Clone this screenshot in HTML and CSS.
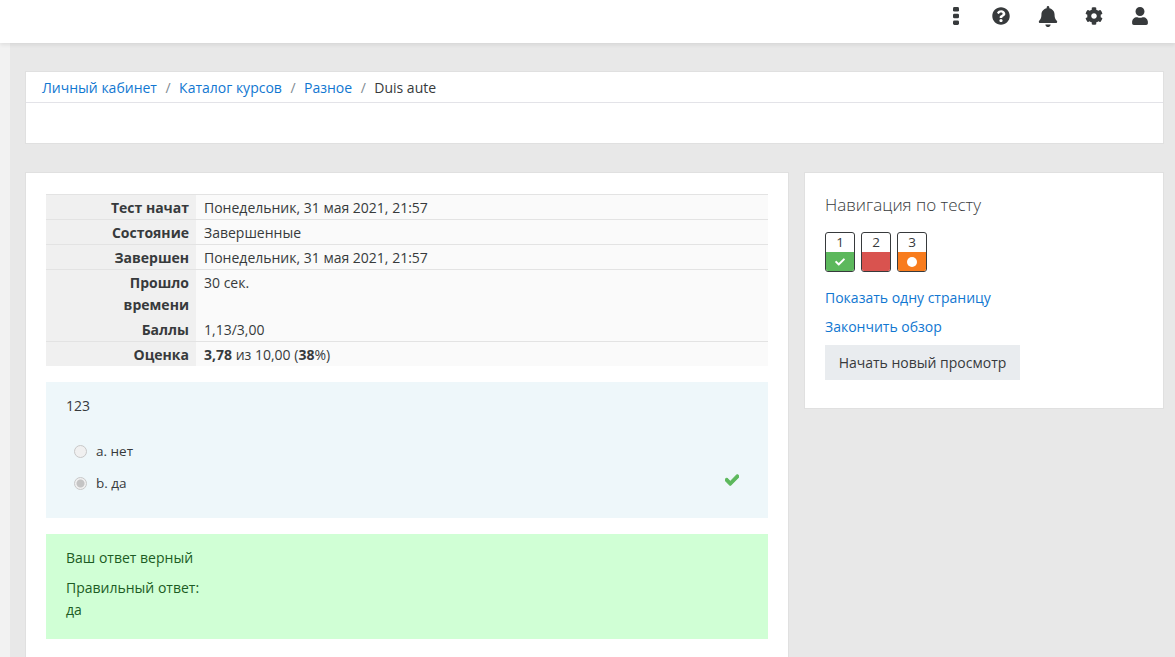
FILE: index.html
```html
<!DOCTYPE html>
<html lang="ru">
<head>
    <meta charset="UTF-8">
    <title>Duis aute</title>
    <link rel="stylesheet" href="styles.css">
</head>
<body>
<header class="topbar">
    <svg class="icon" viewBox="0 0 6 18"><rect x="0" y="0" width="6" height="4.6" rx="1.4"/><rect x="0" y="6.7" width="6" height="4.6" rx="1.4"/><rect x="0" y="13.4" width="6" height="4.6" rx="1.4"/></svg>
    <svg class="icon icon-help" viewBox="0 0 512 512"><path d="M504 256c0 136.997-111.043 248-248 248S8 392.997 8 256C8 119.083 119.043 8 256 8s248 111.083 248 248zM262.655 90c-54.497 0-89.255 22.957-116.549 63.758-3.536 5.286-2.353 12.415 2.715 16.258l34.699 26.31c5.205 3.947 12.621 3.008 16.665-2.122 17.864-22.658 30.113-35.797 57.303-35.797 20.429 0 45.698 13.148 45.698 32.958 0 14.976-12.363 22.667-32.534 33.976C247.128 238.528 216 254.941 216 296v4c0 6.627 5.373 12 12 12h56c6.627 0 12-5.373 12-12v-1.333c0-28.462 83.186-29.647 83.186-106.667 0-58.002-60.165-102-116.531-102zM256 338c-25.365 0-46 20.635-46 46 0 25.364 20.635 46 46 46s46-20.636 46-46c0-25.365-20.635-46-46-46z"/></svg>
    <svg class="icon icon-bell" viewBox="0 0 448 512"><path d="M224 512c35.32 0 63.97-28.65 63.97-64H160.03c0 35.35 28.65 64 63.97 64zm215.39-149.71c-19.32-20.76-55.47-51.99-55.47-154.29 0-77.7-54.48-139.9-127.94-155.16V32c0-17.67-14.32-32-31.98-32s-31.98 14.33-31.98 32v20.84C118.56 68.1 64.08 130.3 64.08 208c0 102.3-36.15 133.53-55.47 154.29-6 6.45-8.66 14.16-8.61 21.71.11 16.4 12.98 32 32.1 32h383.8c19.12 0 32-15.6 32.1-32 .05-7.55-2.61-15.27-8.61-21.71z"/></svg>
    <svg class="icon" viewBox="0 0 512 512"><path d="M487.4 315.7l-42.6-24.6c4.3-23.2 4.3-47 0-70.2l42.6-24.6c4.9-2.8 7.1-8.6 5.5-14-11.1-35.6-30-67.8-54.7-94.6-3.8-4.1-10-5.1-14.8-2.3L380.8 110c-17.9-15.4-38.5-27.3-60.8-35.1V25.8c0-5.6-3.9-10.5-9.4-11.7-36.7-8.2-74.3-7.8-109.2 0-5.5 1.2-9.4 6.1-9.4 11.7V75c-22.2 7.9-42.8 19.8-60.8 35.1L88.7 85.5c-4.9-2.8-11-1.9-14.8 2.3-24.7 26.7-43.6 58.9-54.7 94.6-1.7 5.4.6 11.2 5.5 14L67.3 221c-4.3 23.2-4.3 47 0 70.2l-42.6 24.6c-4.9 2.8-7.1 8.6-5.5 14 11.1 35.6 30 67.8 54.7 94.6 3.8 4.1 10 5.1 14.8 2.3l42.6-24.6c17.9 15.4 38.5 27.3 60.8 35.1v49.2c0 5.6 3.9 10.5 9.4 11.7 36.7 8.2 74.3 7.8 109.2 0 5.5-1.2 9.4-6.1 9.4-11.7v-49.2c22.2-7.9 42.8-19.8 60.8-35.1l42.6 24.6c4.9 2.8 11 1.9 14.8-2.3 24.7-26.7 43.6-58.9 54.7-94.6 1.5-5.5-.7-11.3-5.6-14.1zM256 336c-44.1 0-80-35.9-80-80s35.9-80 80-80 80 35.9 80 80-35.9 80-80 80z"/></svg>
    <svg class="icon" viewBox="0 0 448 512"><path d="M224 256c70.7 0 128-57.3 128-128S294.7 0 224 0 96 57.3 96 128s57.3 128 128 128zm89.6 32h-16.7c-22.2 10.2-46.9 16-72.9 16s-50.6-5.8-72.9-16h-16.7C60.2 288 0 348.2 0 422.4V464c0 26.5 21.5 48 48 48h352c26.5 0 48-21.5 48-48v-41.6c0-74.2-60.2-134.4-134.4-134.4z"/></svg>
</header>

<div class="wrapper">
    <div class="strip"></div>
    <div class="page">
        <section class="card crumbs-card">
            <nav class="crumbs">
                <a href="#">Личный кабинет</a><span class="sep">/</span>
                <a href="#">Каталог курсов</a><span class="sep">/</span>
                <a href="#">Разное</a><span class="sep">/</span>
                <span>Duis aute</span>
            </nav>
        </section>

        <div class="columns">
            <main class="card main-card">
                <table class="summary">
                    <tr><th>Тест начат</th><td>Понедельник, 31 мая 2021, 21:57</td></tr>
                    <tr><th>Состояние</th><td>Завершенные</td></tr>
                    <tr><th>Завершен</th><td>Понедельник, 31 мая 2021, 21:57</td></tr>
                    <tr class="no-line"><th>Прошло времени</th><td>30 сек.</td></tr>
                    <tr><th>Баллы</th><td>1,13/3,00</td></tr>
                    <tr><th>Оценка</th><td><b>3,78</b> из 10,00 (<b>38</b>%)</td></tr>
                </table>

                <div class="question">
                    <p class="qtext">123</p>
                    <div class="answer">
                        <span class="radio"></span>
                        <span>a. нет</span>
                    </div>
                    <div class="answer">
                        <span class="radio checked"></span>
                        <span>b. да</span>
                        <svg class="tick" viewBox="0 0 512 512"><path d="M173.898 439.404l-166.4-166.4c-9.997-9.997-9.997-26.206 0-36.204l36.203-36.204c9.997-9.998 26.207-9.998 36.204 0L192 312.69 432.095 72.596c9.997-9.997 26.207-9.997 36.204 0l36.203 36.204c9.997 9.997 9.997 26.206 0 36.204l-294.4 294.401c-9.998 9.997-26.207 9.997-36.204-.001z"/></svg>
                    </div>
                </div>

                <div class="feedback">
                    <p class="fb-first">Ваш ответ верный</p>
                    <p>Правильный ответ:<br>да</p>
                </div>
            </main>

            <aside class="card side-card">
                <h5>Навигация по тесту</h5>
                <div class="qnav">
                    <div class="qbtn">
                        <span class="num">1</span>
                        <span class="state green"><svg viewBox="0 0 512 512"><path d="M173.898 439.404l-166.4-166.4c-9.997-9.997-9.997-26.206 0-36.204l36.203-36.204c9.997-9.998 26.207-9.998 36.204 0L192 312.69 432.095 72.596c9.997-9.997 26.207-9.997 36.204 0l36.203 36.204c9.997 9.997 9.997 26.206 0 36.204l-294.4 294.401c-9.998 9.997-26.207 9.997-36.204-.001z"/></svg></span>
                    </div>
                    <div class="qbtn">
                        <span class="num">2</span>
                        <span class="state red"></span>
                    </div>
                    <div class="qbtn">
                        <span class="num">3</span>
                        <span class="state orange"><i class="dot"></i></span>
                    </div>
                </div>
                <a class="side-link" href="#">Показать одну страницу</a>
                <a class="side-link" href="#">Закончить обзор</a>
                <button class="btn" type="button">Начать новый просмотр</button>
            </aside>
        </div>
    </div>
</div>
</body>
</html>
```

FILE: styles.css
```css
html, body {
    height: 100%;
}
body {
    margin: 0;
    overflow: hidden;
    background: #e8e8e8;
    color: #373a3c;
    font-family: "Open Sans", sans-serif;
    font-size: 14px;
    line-height: 1.5;
}
a {
    color: #1177d1;
    text-decoration: none;
}
p {
    margin: 0;
}

/* top bar */
.topbar {
    position: relative;
    display: flex;
    justify-content: flex-end;
    align-items: center;
    height: 43px;
    box-sizing: border-box;
    padding: 0 12px 11px 0;
    background: #fff;
    box-shadow: 0 2px 4px rgba(0, 0, 0, .08);
}
.icon {
    width: 46px;
    height: 18px;
    fill: #373a3c;
}
.icon-help {
    margin: 0 1px 0 -1px;
}
.icon-bell {
    height: 21px;
}

.wrapper {
    display: flex;
    height: calc(100% - 43px);
}
.strip {
    flex: none;
    width: 10px;
    background: #f2f2f2;
}
.page {
    flex: 1;
    min-width: 0;
    padding: 28px 11px 0 15px;
}

.card {
    background: #fff;
    border: 1px solid #e0e0e0;
    box-sizing: border-box;
}

/* breadcrumbs */
.crumbs-card {
    height: 73px;
    margin-bottom: 28px;
}
.crumbs {
    display: flex;
    height: 29px;
    padding: 1px 0 0 16px;
    align-items: center;
    border-bottom: 1px solid #e3e3e8;
}
.sep {
    margin: 0 8.5px;
    color: #818a91;
}

.columns {
    display: flex;
    align-items: flex-start;
    gap: 15px;
}

/* main column */
.main-card {
    flex: none;
    width: 764px;
    height: 600px;
    padding: 21px 20px 0;
}
.summary {
    width: 722px;
    border-collapse: separate;
    border-spacing: 0;
    margin-bottom: 16px;
    border-top: 1px solid #e3e3e3;
}
.summary th, .summary td {
    padding: 2px 7px 0 8px;
    border-bottom: 1px solid #e3e3e3;
    vertical-align: top;
    line-height: 22px;
    font-weight: normal;
}
.summary th {
    width: 121px;
    padding-left: 22px;
    background: #f0f0f0;
    font-weight: bold;
    text-align: right;
}
.summary td {
    background: #fafafa;
}
.summary b {
    font-weight: bold;
}
.summary tr:last-child th, .summary tr:last-child td {
    border-bottom: 0;
}
.summary .no-line th {
    border-bottom-color: #f0f0f0;
}
.summary .no-line td {
    border-bottom-color: #fafafa;
}

.question {
    height: 136px;
    box-sizing: border-box;
    padding: 13px 20px 0;
    margin-bottom: 16px;
    background: #eef7fa;
    font-size: 13.5px;
}
.qtext {
    margin-bottom: 18px;
    font-size: 14px;
    line-height: 22px;
}
.answer {
    display: flex;
    align-items: center;
    height: 32px;
    padding-left: 8px;
}
.radio {
    width: 13px;
    height: 13px;
    margin-right: 9px;
    border: 1px solid #c8c8c8;
    border-radius: 50%;
    background: #f0f0f0;
    box-sizing: border-box;
}
.radio.checked {
    background: radial-gradient(circle, #c4c4c4 0 3.5px, #f0f0f0 4.5px);
}
.tick {
    width: 14px;
    height: 14px;
    margin-left: auto;
    margin-right: 9px;
    margin-top: -7px;
    fill: #5cb85c;
    stroke: #5cb85c;
    stroke-width: 40;
}

.feedback {
    height: 105px;
    box-sizing: border-box;
    padding: 13px 20px 0;
    background: #d0ffd5;
    color: #1c5c24;
    line-height: 22px;
}
.fb-first {
    margin-bottom: 8px;
}

/* quiz navigation */
.side-card {
    flex: none;
    width: 360px;
    height: 237px;
    padding: 20px;
}
h5 {
    margin: 0 0 15px;
    font-size: 17px;
    font-weight: 300;
    line-height: 24px;
    color: #373a3c;
}
.qnav {
    display: flex;
    gap: 6px;
    margin-bottom: 15px;
}
.qbtn {
    display: flex;
    flex-direction: column;
    width: 30px;
    height: 40px;
    box-sizing: border-box;
    border: 1px solid #373a3c;
    border-radius: 3px;
    overflow: hidden;
    background: #fff;
    text-align: center;
    font-size: 13.5px;
}
.num {
    height: 19px;
    line-height: 18px;
}
.state {
    flex: 1;
    display: flex;
    align-items: center;
    justify-content: center;
}
.state svg {
    width: 10px;
    height: 10px;
    fill: #fff;
}
.green { background: #5cb85c; }
.red { background: #d9534f; }
.orange { background: #f87c1d; }
.dot {
    width: 10px;
    height: 10px;
    border-radius: 50%;
    background: #fff;
}
.side-link {
    display: block;
    margin-bottom: 8px;
    line-height: 21px;
}
.btn {
    display: block;
    width: 195px;
    height: 35px;
    padding: 0;
    border: 0;
    background: #e9ecef;
    color: #373a3c;
    font: 14px "Open Sans", sans-serif;
}
```
